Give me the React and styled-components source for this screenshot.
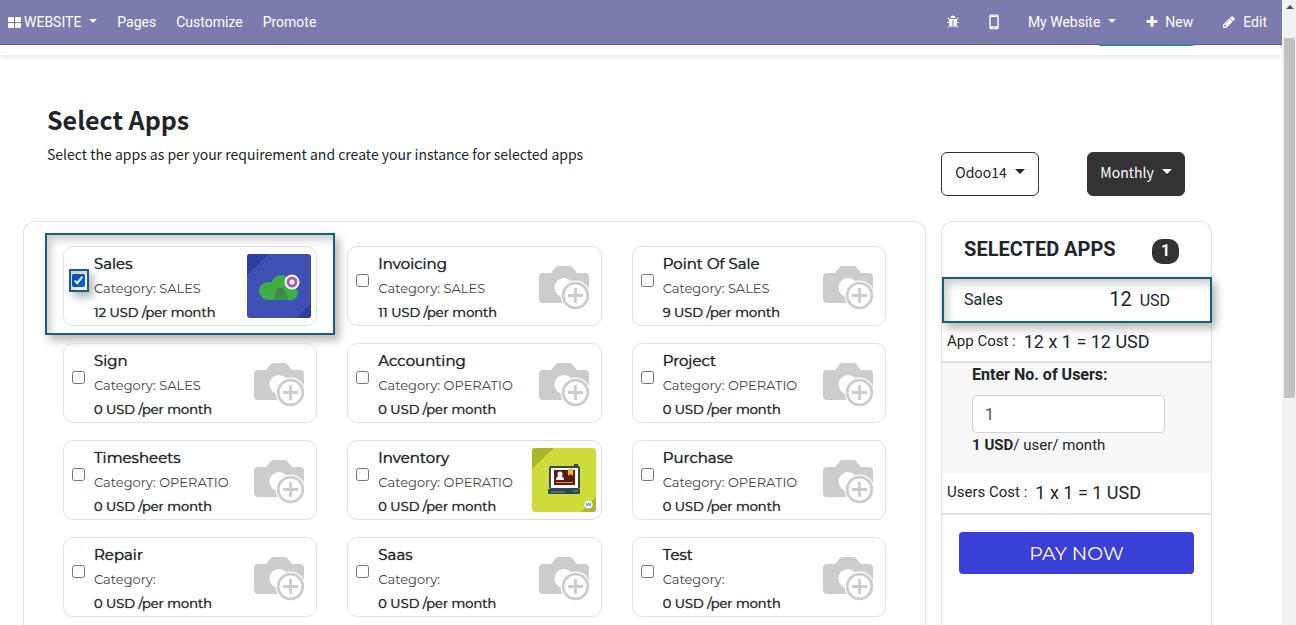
import React, { useState } from "react";
import styled, { createGlobalStyle, css } from "styled-components";

const GlobalStyle = createGlobalStyle`
  * { box-sizing: border-box; }
  body {
    margin: 0;
    background: #fff;
    color: #212529;
    font-family: Roboto, "Liberation Sans", sans-serif;
    font-size: 16px;
  }
  h1, h2, p { margin: 0; }
  button, input { font: inherit; color: inherit; }
`;

const humanist = `"Noto Sans CJK JP", "Open Sans", sans-serif`;
const geometric = `Montserrat, Inter, sans-serif`;

const Shell = styled.div`
  display: flex;
  height: 100vh;
  overflow: hidden;
`;

const Page = styled.div`
  flex: 1;
  min-width: 0;
  display: flex;
  flex-direction: column;
`;

const Navbar = styled.nav`
  flex: none;
  display: flex;
  align-items: center;
  justify-content: space-between;
  height: 45px;
  padding: 0 15px 0 8px;
  background: #7c7bad;
  border-bottom: 1px solid #5f5e97;
`;

const NavGroup = styled.div`
  display: flex;
  align-items: center;
  gap: ${(p) => p.$gap}px;
`;

const NavLink = styled.a`
  display: flex;
  align-items: center;
  gap: ${(p) => p.$gap || 0}px;
  color: #fff;
  font-size: 14px;
  line-height: 20px;
  text-decoration: none;
  white-space: nowrap;
`;

const MenuLabel = styled.span`
  display: flex;
  align-items: center;
`;

const Caret = styled.span`
  width: 0;
  height: 0;
  margin-left: 8px;
  margin-bottom: 2px;
  border: ${(p) => p.$size}px solid transparent;
  border-top-color: currentColor;
  border-bottom: 0;
`;

const SiteHeader = styled.div`
  flex: none;
  display: flex;
  justify-content: flex-end;
  height: 10px;
  padding-right: 89px;
  box-shadow: 0 2px 4px rgba(0, 0, 0, 0.1);
`;

const HeaderAccent = styled.div`
  position: relative;
  width: 94px;
  height: 2px;
  margin-top: -1px;
  background: #35869a;
`;

const Main = styled.main`
  flex: 1;
  min-height: 0;
  display: flex;
  flex-direction: column;
  padding: 46px 70px 0 23px;
`;

const Columns = styled.div`
  display: grid;
  grid-template-columns: 10fr 3fr;
  gap: 15px;
`;

const Intro = styled(Columns)`
  height: 120px;
`;

const Body = styled(Columns)`
  flex: 1;
  min-height: 404px;
`;

const Heading = styled.div`
  padding: 0 24px;
  font-family: ${humanist};
`;

const Title = styled.h1`
  font-size: 25px;
  line-height: 36px;
  font-weight: 700;
`;

const Subtitle = styled.p`
  font-size: 14px;
  line-height: 34px;
`;

const Options = styled.div`
  display: flex;
  align-items: flex-start;
  gap: 48px;
  padding-top: 51px;
`;

const OptionButton = styled.button`
  display: flex;
  align-items: center;
  justify-content: center;
  width: 98px;
  height: 44px;
  padding: 0 0 4px;
  border: 1px solid #333;
  border-radius: 6px;
  background: ${(p) => (p.$dark ? "#333" : "#fff")};
  color: ${(p) => (p.$dark ? "#fff" : "#212529")};
  font-family: ${humanist};
  font-size: 14px;
  line-height: 20px;
`;

const panel = css`
  border: 1px solid #dee2e6;
  border-bottom: 0;
  border-radius: 12px 12px 0 0;
`;

const AppGrid = styled.section`
  ${panel}
  display: grid;
  grid-template-columns: repeat(3, minmax(0, 1fr));
  align-content: start;
  gap: 17px 30px;
  padding: 24px 39px 0;
`;

const Card = styled.label`
  position: relative;
  display: flex;
  align-items: center;
  height: 80px;
  padding: 0 5px 0 8px;
  border: 1px solid #dee2e6;
  border-radius: 10px;
`;

const frame = css`
  border: 2px solid #17607d;
  box-shadow: 4px 5px 9px rgba(0, 0, 0, 0.3), inset 4px 5px 9px rgba(0, 0, 0, 0.2);
`;

const CardFrame = styled.span`
  ${frame}
  position: absolute;
  inset: -14px -19px -10px;
  pointer-events: none;
`;

const TickBox = styled.span`
  position: relative;
  display: flex;
  margin: 0 9px 12px 0;
`;

const TickFrame = styled.span`
  ${frame}
  position: absolute;
  inset: -5px -4px -5px -3px;
  pointer-events: none;
`;

const Tick = styled.input`
  width: 13px;
  height: 13px;
  margin: 0;
  accent-color: #0b5fd8;
`;

const CardText = styled.span`
  flex: 1;
  min-width: 0;
  display: flex;
  flex-direction: column;
  padding-top: 4px;
  font-family: ${geometric};
  white-space: nowrap;
`;

const strong = css`
  font-weight: 400;
  text-shadow: 0 0 1px currentColor;
`;

const AppName = styled.span`
  ${strong}
  font-size: 15px;
  line-height: 24px;
`;

const Category = styled.span`
  font-size: 13px;
  line-height: 24px;
  color: #444;
`;

const Price = styled.span`
  ${strong}
  font-size: 13px;
  line-height: 24px;
`;

const Picture = styled.svg`
  flex: none;
  width: 64px;
  height: 64px;
`;

const Summary = styled.aside`
  ${panel}
  display: flex;
  flex-direction: column;
`;

const SummaryHead = styled.div`
  display: flex;
  align-items: center;
  justify-content: space-between;
  height: 55px;
  padding: 0 32px 2px 22px;
`;

const SummaryTitle = styled.h2`
  font-size: 20px;
  line-height: 24px;
  font-weight: 700;
`;

const Count = styled.span`
  width: 27px;
  height: 25px;
  margin-top: 6px;
  border-radius: 10px;
  background: #333;
  color: #fff;
  font-size: 16px;
  line-height: 24px;
  font-weight: 700;
  text-align: center;
`;

const SelectedRow = styled.div`
  ${frame}
  display: flex;
  align-items: center;
  justify-content: space-between;
  height: 46px;
  margin-right: -1px;
  padding: 0 40px 0 20px;
  font-size: 16px;
  line-height: 24px;
`;

const Amount = styled.span`
  font-size: 20px;
`;

const Unit = styled.span`
  margin-left: 8px;
  font-size: 16px;
`;

const CostRow = styled.div`
  display: flex;
  align-items: center;
  gap: 8px;
  height: ${(p) => p.$height}px;
  padding: 0 0 2px 5px;
  border-bottom: 2px solid #dee2e6;
  font-size: 15px;
`;

const Formula = styled.span`
  font-size: 18px;
`;

const UsersBox = styled.div`
  display: flex;
  flex-direction: column;
  height: 110px;
  padding: 0 46px 0 30px;
  background: #f7f7f7;
  font-size: 15px;
  line-height: 24px;
`;

const UsersLabel = styled.label`
  font-size: 16px;
  font-weight: 700;
  margin-bottom: 8px;
`;

const UsersInput = styled.input`
  width: 100%;
  height: 38px;
  padding: 0 12px;
  border: 1px solid #ced4da;
  border-radius: 4px;
  background: #fff;
  color: #495057;
  font-size: 16px;
`;

const PayButton = styled.button`
  height: 42px;
  margin: 17px 17px 0;
  border: 0;
  border-radius: 4px;
  background: #3a3fd8;
  color: #fff;
  font-family: ${geometric};
  font-size: 19px;
  font-weight: 400;
`;

const ScrollTrack = styled.div`
  flex: none;
  display: flex;
  flex-direction: column;
  align-items: center;
  width: 14px;
  padding: 5px 1px 0 2px;
  background: #f1f1f1;
  color: #505050;
`;

const ScrollArrow = styled.span`
  width: 0;
  height: 0;
  border: 4px solid transparent;
  border-top: 0;
  border-bottom-color: currentColor;
`;

const ScrollThumb = styled.div`
  width: 100%;
  height: 58%;
  margin-top: 29px;
  background: #c1c1c1;
`;

const WindowsIcon = () => (
  <svg width="13" height="11" viewBox="0 0 13 11" fill="currentColor" aria-hidden="true">
    <rect width="6" height="5" rx="1" />
    <rect x="7" width="6" height="5" rx="1" />
    <rect y="6" width="6" height="5" rx="1" />
    <rect x="7" y="6" width="6" height="5" rx="1" />
  </svg>
);

const PhoneIcon = () => (
  <svg width="10" height="16" viewBox="0 0 10 16" aria-hidden="true">
    <path
      fill="currentColor"
      fillRule="evenodd"
      d="M2 .5h6A1.7 1.7 0 0 1 9.7 2.200v11.300A1.700 1.700 0 0 1 8 15.200H2A1.700 1.700 0 0 1 .3 13.500V2.200A1.700 1.700 0 0 1 2 .5zM1.700 3v9.300h6.600V3zM5 13a.8.8 0 1 0 0 1.600A.8.8 0 0 0 5 13zM3.800 1.500v.5h2.400v-.5z"
    />
  </svg>
);

const NavIcon = ({ d }) => (
  <svg width="14" height="14" viewBox="0 0 1792 1792" fill="currentColor" aria-hidden="true">
    <path d={d} />
  </svg>
);

const bugPath =
  "M1696 960q0 26-19 45t-45 19h-224q0 171-67 290l208 209q19 19 19 45t-19 45q-18 19-45 19t-45-19l-198-197q-5 5-15 13t-42 28.500-65 36.500-82 29-97 13v-896h-128v896q-51 0-101.500-13.500t-87-33-66-39-43.500-32.500l-15-14-183 207q-20 21-48 21-24 0-43-17-19-18-20.500-44.500t15.500-46.500l202-227q-58-114-58-274h-224q-26 0-45-19t-19-45 19-45 45-19h224v-294l-173-173q-19-19-19-45t19-45 45-19 45 19l173 173h844l173-173q19-19 45-19t45 19 19 45-19 45l-173 173v294h224q26 0 45 19t19 45zm-480-576h-640q0-133 93.500-226.500t226.500-93.500 226.500 93.500 93.500 226.500z";
const plusPath =
  "M1600 736v192q0 40-28 68t-68 28h-416v416q0 40-28 68t-68 28h-192q-40 0-68-28t-28-68v-416h-416q-40 0-68-28t-28-68v-192q0-40 28-68t68-28h416v-416q0-40 28-68t68-28h192q40 0 68 28t28 68v416h416q40 0 68 28t28 68z";
const pencilPath =
  "M491 1536l91-91-235-235-91 91v107h128v128h107zm523-928q0-22-22-22-10 0-17 7l-542 542q-7 7-7 17 0 22 22 22 10 0 17-7l542-542q7-7 7-17zm-54-192l416 416-832 832h-416v-416zm683 96q0 53-37 90l-166 166-416-416 166-165q36-38 90-38 53 0 91 38l235 234q37 39 37 91z";

const CameraPicture = () => (
  <Picture viewBox="0 0 64 64" aria-hidden="true">
    <path
      fill="#ccc"
      d="M11 19h8l5-6q1-1 2-1h12q1 0 2 1l5 6h8q4 0 4 4v22q0 4-4 4H11q-4 0-4-4V23q0-4 4-4z"
    />
    <circle cx="32" cy="33.500" r="9.500" fill="#fff" />
    <circle cx="43.500" cy="41.500" r="15" fill="#fff" />
    <circle cx="43.500" cy="41.500" r="12.300" fill="#fff" stroke="#ccc" strokeWidth="2.800" />
    <path d="M43.500 34v15M36 41.500h15" stroke="#ccc" strokeWidth="2.800" />
  </Picture>
);

const SalesPicture = () => (
  <Picture viewBox="0 0 64 64" aria-hidden="true">
    <clipPath id="salesTile"><rect width="64" height="64" rx="3" /></clipPath>
    <g clipPath="url(#salesTile)">
      <rect width="64" height="64" fill="#3f51b5" />
      <path d="M0 0h22L0 21zM64 49v15H49z" fill="#303f9f" />
      <g fill="#3fae49">
        <circle cx="21" cy="37" r="9" />
        <circle cx="34" cy="31" r="10" />
        <circle cx="44" cy="39" r="7" />
        <path d="M20 34h26v12H20z" />
      </g>
      <path d="M26 46l4-9 5-3 4 4 2 8z" fill="#38964a" />
      <circle cx="33" cy="38" r="4" fill="#4a7f50" />
      <circle cx="45" cy="28" r="7.500" fill="#fff" />
      <circle cx="45" cy="28" r="4" fill="none" stroke="#a95bb5" strokeWidth="3" />
    </g>
  </Picture>
);

const InventoryPicture = () => (
  <Picture viewBox="0 0 64 64" aria-hidden="true">
    <clipPath id="inventoryTile"><rect width="64" height="64" rx="3" /></clipPath>
    <g clipPath="url(#inventoryTile)">
      <rect width="64" height="64" fill="#cddc39" />
      <path d="M0 0h22L0 21zM64 49v15H49z" fill="#afb42b" />
      <rect x="42" y="16" width="4" height="3" fill="#37474f" />
      <rect x="17" y="18" width="31" height="23" rx="2" fill="#37474f" />
      <rect x="19" y="20" width="27" height="20" fill="#fff" />
      <rect x="22" y="22" width="21" height="15" fill="#5b1a16" />
      <circle cx="28" cy="26" r="2.500" fill="#fff" />
      <path d="M24 32q0-4 4-4t4 4z" fill="#fff" />
      <path d="M36 21h5v7l-2.500-2-2.500 2z" fill="#fbb81b" />
      <path d="M24 34h17v1H24z" fill="#f08a24" />
      <rect x="16" y="41" width="32" height="5" rx="1" fill="#2e4450" />
      <path d="M19 44h14M41 43h5" stroke="#7f949d" />
      <circle cx="56.500" cy="56.500" r="4" fill="#fff" />
      <path d="M54 55l1.200 3 1.300-3 1.300 3 1.200-3" fill="none" stroke="#4a8fe0" />
    </g>
  </Picture>
);

const pictures = { sales: SalesPicture, inventory: InventoryPicture };

const apps = [
  { name: "Sales", category: "SALES", price: 12, picture: "sales" },
  { name: "Invoicing", category: "SALES", price: 11 },
  { name: "Point Of Sale", category: "SALES", price: 9 },
  { name: "Sign", category: "SALES", price: 0 },
  { name: "Accounting", category: "OPERATIO", price: 0 },
  { name: "Project", category: "OPERATIO", price: 0 },
  { name: "Timesheets", category: "OPERATIO", price: 0 },
  { name: "Inventory", category: "OPERATIO", price: 0, picture: "inventory" },
  { name: "Purchase", category: "OPERATIO", price: 0 },
  { name: "Repair", category: "", price: 0 },
  { name: "Saas", category: "", price: 0 },
  { name: "Test", category: "", price: 0 },
];

function AppCard({ app, highlighted }) {
  const [checked, setChecked] = useState(app.name === "Sales");
  const Drawing = pictures[app.picture] || CameraPicture;
  return (
    <Card>
      {highlighted && <CardFrame />}
      <TickBox>
        <Tick type="checkbox" checked={checked} onChange={() => setChecked(!checked)} />
        {highlighted && <TickFrame />}
      </TickBox>
      <CardText>
        <AppName>{app.name}</AppName>
        <Category>Category: {app.category}</Category>
        <Price>{app.price} USD /per month</Price>
      </CardText>
      <Drawing />
    </Card>
  );
}

export default function App() {
  const [users, setUsers] = useState("1");
  return (
    <Shell>
      <GlobalStyle />
      <Page>
        <Navbar>
          <NavGroup $gap={20}>
            <NavLink href="#website" $gap={3}>
              <WindowsIcon />
              <MenuLabel>WEBSITE<Caret $size={4} /></MenuLabel>
            </NavLink>
            <NavLink href="#pages">Pages</NavLink>
            <NavLink href="#customize">Customize</NavLink>
            <NavLink href="#promote">Promote</NavLink>
          </NavGroup>
          <NavGroup $gap={29}>
            <NavLink href="#debug" aria-label="Debug"><NavIcon d={bugPath} /></NavLink>
            <NavLink href="#mobile" aria-label="Mobile preview"><PhoneIcon /></NavLink>
            <NavLink href="#site"><MenuLabel>My Website<Caret $size={4} /></MenuLabel></NavLink>
            <NavLink href="#new" $gap={6}><NavIcon d={plusPath} />New</NavLink>
            <NavLink href="#edit" $gap={7}><NavIcon d={pencilPath} />Edit</NavLink>
          </NavGroup>
        </Navbar>
        <SiteHeader><HeaderAccent /></SiteHeader>
        <Main>
          <Intro>
            <Heading>
              <Title>Select Apps</Title>
              <Subtitle>
                Select the apps as per your requirement and create your instance for selected apps
              </Subtitle>
            </Heading>
            <Options>
              <OptionButton type="button">Odoo14<Caret $size={5} /></OptionButton>
              <OptionButton type="button" $dark>Monthly<Caret $size={5} /></OptionButton>
            </Options>
          </Intro>
          <Body>
            <AppGrid>
              {apps.map((app, i) => (
                <AppCard key={app.name} app={app} highlighted={i === 0} />
              ))}
            </AppGrid>
            <Summary>
              <SummaryHead>
                <SummaryTitle>SELECTED APPS</SummaryTitle>
                <Count>1</Count>
              </SummaryHead>
              <SelectedRow>
                <span>Sales</span>
                <span><Amount>12</Amount><Unit>USD</Unit></span>
              </SelectedRow>
              <CostRow $height={40}>App Cost : <Formula>12 x 1 = 12 USD</Formula></CostRow>
              <UsersBox>
                <UsersLabel htmlFor="users">Enter No. of Users:</UsersLabel>
                <UsersInput id="users" value={users} onChange={(e) => setUsers(e.target.value)} />
                <span><b>1 USD</b>/ user/ month</span>
              </UsersBox>
              <CostRow $height={42}>Users Cost : <Formula>1 x 1 = 1 USD</Formula></CostRow>
              <PayButton type="button">PAY NOW</PayButton>
            </Summary>
          </Body>
        </Main>
      </Page>
      <ScrollTrack>
        <ScrollArrow />
        <ScrollThumb />
      </ScrollTrack>
    </Shell>
  );
}
